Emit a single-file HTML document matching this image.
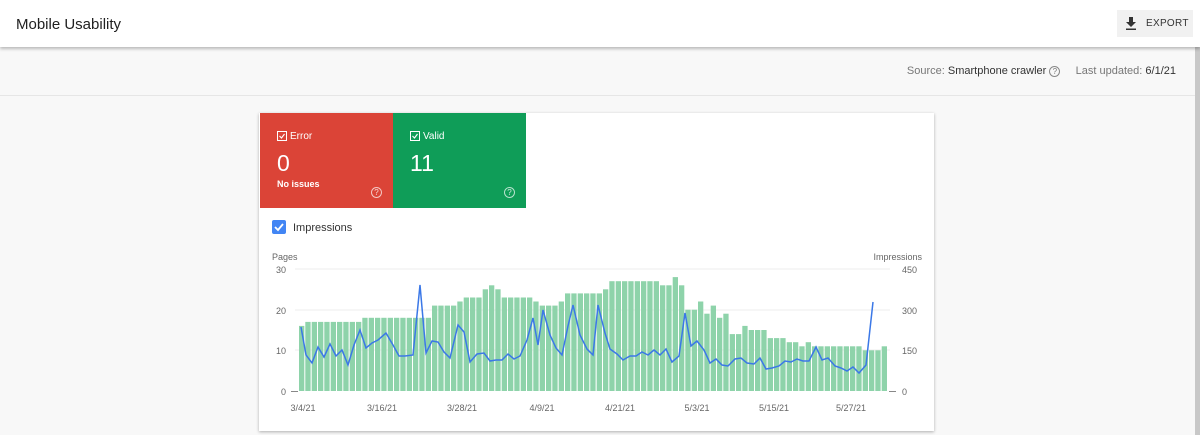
<!DOCTYPE html>
<html><head><meta charset="utf-8"><style>
*{margin:0;padding:0;box-sizing:border-box}
body{width:1200px;height:435px;overflow:hidden;background:#f8f8f8;font-family:"Liberation Sans",sans-serif;position:relative}
.hdr{position:absolute;left:0;top:0;width:1200px;height:47px;background:#fff;box-shadow:0 2px 3px rgba(0,0,0,.25);z-index:2}
.hdr h1{position:absolute;left:16px;top:16px;font-size:15px;font-weight:normal;color:#212121}
.exp{position:absolute;left:1117px;top:10px;width:76px;height:27px;background:#f1f1f1;font-size:10px;color:#333;letter-spacing:.3px}
.exp span{position:absolute;left:29px;top:8px}
.src{position:absolute;top:65px;right:24px;font-size:11px;color:#777}
.src b{font-weight:normal;color:#333}
.sep{position:absolute;left:0;top:95px;width:1195px;height:1px;background:#e6e6e6}
.sb{position:absolute;left:1195px;top:47px;width:5px;height:388px;background:#c8c8c8}
.card{position:absolute;left:259px;top:113px;width:675px;height:318px;background:#fff;box-shadow:0 1px 3px rgba(0,0,0,.3)}
.tile{position:absolute;top:0;width:133px;height:95px;color:#fff}
.tile .l{position:absolute;left:17px;top:18px;font-size:10px}
.tile .n{position:absolute;left:17px;top:37px;font-size:23px}
.tile .s{position:absolute;left:17px;top:66px;font-size:9px;font-weight:bold}
.cb{display:inline-block;width:10px;height:10px;border:1px solid #fff;vertical-align:-2px;margin-right:3px;position:relative}
.cb svg{position:absolute;left:0;top:0}
.q{position:absolute;left:111px;top:74px;width:11px;height:11px;border:1px solid rgba(255,255,255,.7);border-radius:50%;font-size:8px;text-align:center;line-height:9px;color:rgba(255,255,255,.8)}
.imp{position:absolute;left:13px;top:107px;font-size:11px;color:#333}
.imp i{display:inline-block;width:14px;height:14px;background:#4285f4;border-radius:2px;vertical-align:-3px;margin-right:7px}
</style></head><body>
<div class="hdr"><h1>Mobile Usability</h1>
<div class="exp"><svg style="position:absolute;left:8px;top:7px" width="12" height="13" viewBox="0 0 12 13"><path d="M4 0h4v5h3L6 10 1 5h3z M1 11.5h10v1.5H1z" fill="#333"/></svg><span>EXPORT</span></div></div>
<div class="src">Source: <b>Smartphone crawler</b> <span style="display:inline-block;width:11px;height:11px;border:1px solid #888;border-radius:50%;font-size:8px;text-align:center;line-height:9px">?</span> &nbsp;&nbsp;&nbsp; Last updated: <b>6/1/21</b></div>
<div class="sep"></div><div class="sb"></div>
<div class="card">
<div class="tile" style="left:1px;background:#db4437"><div class="l"><span class="cb"><svg width="8" height="8" viewBox="0 0 8 8"><path d="M1.5 4l2 2 3-4" stroke="#fff" stroke-width="1.1" fill="none"/></svg></span>Error</div><div class="n">0</div><div class="s">No issues</div><div class="q">?</div></div>
<div class="tile" style="left:134px;background:#0f9d58"><div class="l"><span class="cb"><svg width="8" height="8" viewBox="0 0 8 8"><path d="M1.5 4l2 2 3-4" stroke="#fff" stroke-width="1.1" fill="none"/></svg></span>Valid</div><div class="n">11</div><div class="q">?</div></div>
<div class="imp"><i><svg width="14" height="14" viewBox="0 0 14 14"><path d="M3 7l3 3 5-6" stroke="#fff" stroke-width="1.8" fill="none"/></svg></i>Impressions</div>
</div>
<svg id="ch" style="position:absolute;left:0;top:0" width="1200" height="435">
<g font-family="Liberation Sans" font-size="9" fill="#666">
<text x="272" y="260">Pages</text><text x="922" y="260" text-anchor="end">Impressions</text>
<text x="286" y="273" text-anchor="end">30</text><text x="286" y="314" text-anchor="end">20</text><text x="286" y="354" text-anchor="end">10</text><text x="286" y="395" text-anchor="end">0</text>
<text x="902" y="273">450</text><text x="902" y="314">300</text><text x="902" y="354">150</text><text x="902" y="395">0</text>
<text x="303" y="411" text-anchor="middle">3/4/21</text><text x="382" y="411" text-anchor="middle">3/16/21</text><text x="462" y="411" text-anchor="middle">3/28/21</text><text x="542" y="411" text-anchor="middle">4/9/21</text><text x="620" y="411" text-anchor="middle">4/21/21</text><text x="697" y="411" text-anchor="middle">5/3/21</text><text x="774" y="411" text-anchor="middle">5/15/21</text><text x="851" y="411" text-anchor="middle">5/27/21</text>
</g>
<g stroke="#eee"><line x1="295" y1="269" x2="890" y2="269"/><line x1="295" y1="310" x2="890" y2="310"/><line x1="295" y1="350" x2="890" y2="350"/></g>
<line x1="291" y1="391.5" x2="298" y2="391.5" stroke="#888"/><line x1="889" y1="391.5" x2="896" y2="391.5" stroke="#888"/>
<g id="bars" fill="#8ed3aa"></g>
<polyline fill="none" stroke="#3b78e7" stroke-width="1.5" points="301,327 306,355 312,363 318,347 324,357 330,344 336,356 342,350 348,365 354,345 360,330 366,348 372,343 378,340 386,333 393,345 399,356 405,356 413,355 420,285 426,353 432,341 438,342 444,352 450,358 458,325 464,332 470,362 477,354 484,353 490,361 496,360 502,360 508,354 514,359 520,356 527,340 533,318 538,345 543,310 550,335 556,348 562,355 568,326 573,305 580,335 587,349 593,355 598,305 605,333 610,349 617,354 623,360 630,356 636,356 642,352 648,355 654,350 660,355 666,349 672,362 679,356 685,313 691,346 697,341 704,350 710,363 716,359 722,365 728,366 735,359 741,358 747,363 754,364 760,358 766,369 772,368 779,366 785,361 791,362 797,359 803,361 809,361 816,347 822,360 828,358 835,366 841,368 847,371 853,367 859,373 866,365 873,302"/>
</svg>
<script>
var v=[16,17,17,17,17,17,17,17,17,17,18,18,18,18,18,18,18,18,18,18,18,21,21,21,21,22,23,23,23,25,26,25,23,23,23,23,23,22,21,21,21,22,24,24,24,24,24,24,25,27,27,27,27,27,27,27,27,26,26,28,26,20,20,22,19,21,18,19,14,14,16,15,15,15,13,13,13,12,12,11,12,11,11,11,11,11,11,11,11,10,10,10,11];
var g=document.getElementById('bars'),s='',w=589/v.length;
for(var i=0;i<v.length;i++){var h=v[i]*122/30;s+='<rect x="'+(299+i*w).toFixed(1)+'" y="'+(391-h).toFixed(1)+'" width="'+(w-1).toFixed(1)+'" height="'+h.toFixed(1)+'"/>';}
g.innerHTML=s;
</script>
</body></html>
